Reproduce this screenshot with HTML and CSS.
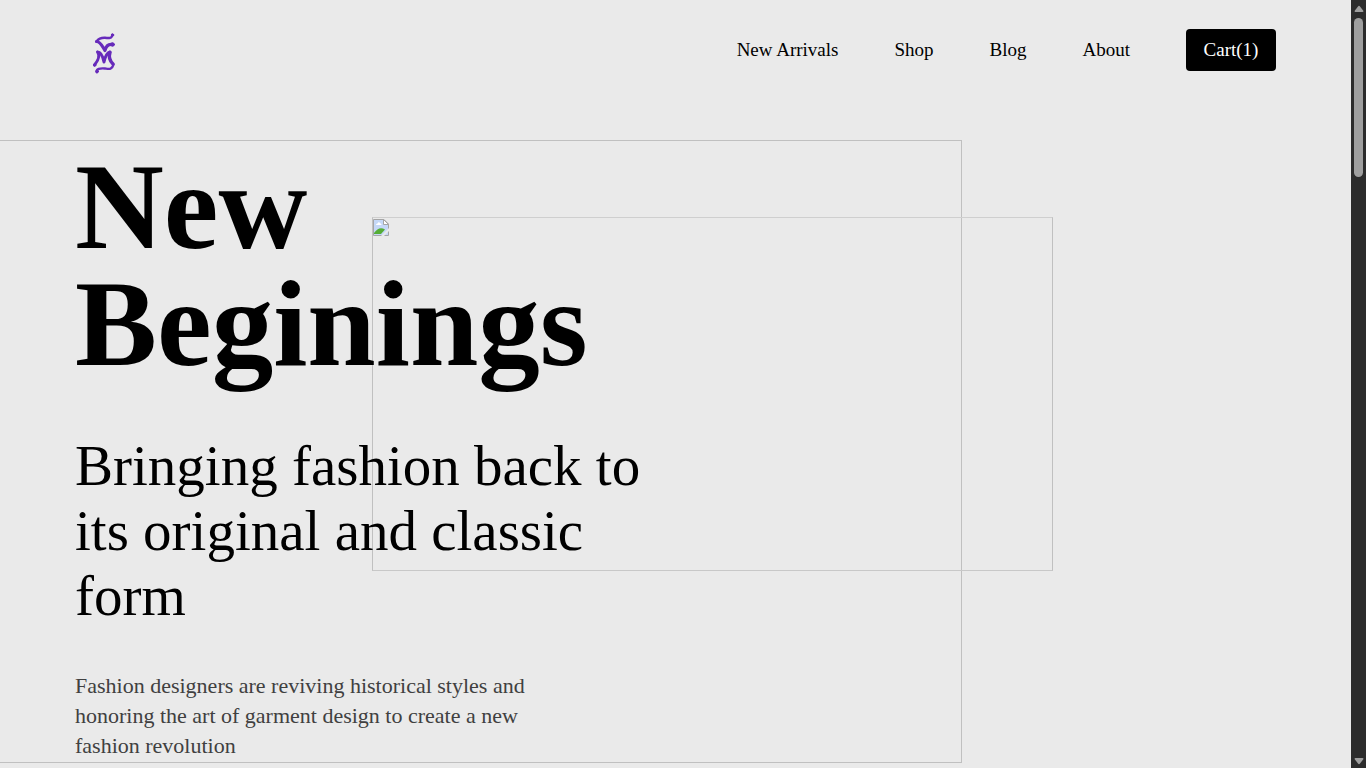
FILE: index.html
```html
<!DOCTYPE html>
<html lang="en">
<head>
<meta charset="utf-8">
<meta name="viewport" content="width=device-width, initial-scale=1">
<title>New Beginings</title>
<link rel="stylesheet" href="styles.css">
</head>
<body>
<div class="shell">
  <div class="page">
    <header class="header">
      <a class="logo" href="#" aria-label="Home">
        <svg width="24" height="42" viewBox="0 0 24 42" fill="none" stroke="#672bbb" stroke-linecap="round" stroke-linejoin="round">
          <path stroke-width="2.400" d="M20.300 3C20 6.500 17 6.200 13 5.800C9 5.600 6 7.500 4.500 9.500"/>
          <path stroke-width="3.200" d="M4.500 9.500C8.500 9.500 10 14 13 18.500C14 14 16 11.500 21 12.500"/>
          <path stroke-width="3" d="M5.500 20C8 23 6.500 28 2.500 33M5.500 20C9 20 11 25 12 30C13 25 15 21 18 20"/>
          <path stroke-width="3.400" d="M18 20.500C16.500 25 18 29 21 32"/>
          <path stroke-width="2.400" d="M21.500 32.500C20 38 17 37 13 36.500C8 36 4 37 5 40"/>
          <circle cx="20.500" cy="3" r="1.200" fill="#672bbb"/><circle cx="20.500" cy="12.500" r="1.800" fill="#672bbb"/>
          <circle cx="2.700" cy="33" r="1.200" fill="#672bbb"/><circle cx="5" cy="39.500" r="1.400" fill="#672bbb"/>
        </svg>
      </a>
      <nav class="nav">
        <a href="#">New Arrivals</a>
        <a href="#">Shop</a>
        <a href="#">Blog</a>
        <a href="#">About</a>
        <button class="cart" type="button">Cart(1)</button>
      </nav>
    </header>
    <main class="hero">
      <div class="frame frame-back"></div>
      <div class="frame frame-front">
        <svg width="16" height="17" viewBox="0 0 16 17">
          <path d="M0.500 0.500H11L15.500 5V16.500H0.500Z" fill="#c5d8f7" stroke="#a5a5a5"/>
          <path d="M3 6Q3 4.500 4.500 4.500Q5.500 2 7.500 4.500Q8.500 4.500 8.500 6Z" fill="#fff"/>
          <path d="M1 15V14Q6 7 12 10.500L8 15Z" fill="#55ad36"/>
          <path d="M10.500 0.500V5.500H15.500Z" fill="#fff" stroke="#a5a5a5"/>
          <path d="M8 17L16 9V12L11 17Z" fill="#eaeaea"/>
        </svg>
      </div>
      <div class="copy">
        <h1>New Beginings</h1>
        <h2>Bringing fashion back to its original and classic form</h2>
        <p>Fashion designers are reviving historical styles and honoring the art of garment design to create a new fashion revolution</p>
      </div>
    </main>
  </div>
  <div class="scrollbar" aria-hidden="true">
    <svg width="10" height="8" viewBox="0 0 10 8"><path d="M4 1.500Q5 0 6 1.500L9.500 6Q9.500 7 8.500 7H1.500Q.5 7 .5 6Z" fill="#9f9f9f"/></svg>
    <div class="thumb"></div>
    <svg class="down" width="10" height="8" viewBox="0 0 10 8"><path d="M4 6.500Q5 8 6 6.500L9.500 2Q9.500 1 8.500 1H1.500Q.5 1 .5 2Z" fill="#9f9f9f"/></svg>
  </div>
</div>
</body>
</html>
```
FILE: styles.css
```css
* {
  box-sizing: border-box;
}

body {
  margin: 0;
  background: #eaeaea;
  color: #000;
  font-family: "Liberation Serif", "Times New Roman", serif;
}

.shell {
  display: flex;
  height: 100vh;
  overflow: hidden;
}

.page {
  flex: 1;
  min-width: 0;
}

.header {
  display: flex;
  justify-content: space-between;
  align-items: flex-start;
  height: 140px;
  padding: 29px 75px 0;
}

.logo {
  display: block;
  padding: 3px 17px 0;
}

.logo svg {
  display: block;
}

.nav {
  display: flex;
  align-items: center;
  gap: 56px;
  font-size: 19px;
}

.nav a {
  color: inherit;
  text-decoration: none;
}

.cart {
  min-width: 90px;
  height: 42px;
  padding: 0 17px;
  border: 0;
  border-radius: 4px;
  background: #000;
  color: #fff;
  font: inherit;
}

.hero {
  position: relative;
  padding: 8px 75px 0;
}

.frame {
  position: absolute;
  border: 1px solid #c0c0c0;
}

.frame-back {
  top: 0;
  left: 0;
  right: 389px;
  height: 623px;
  border-left: 0;
}

.frame-front {
  top: 77px;
  left: 372px;
  right: 298px;
  height: 354px;
  border-top-color: #cfcfcf;
  border-bottom-color: #c8c8c8;
}

.frame-front svg {
  display: block;
  margin-top: 1px;
}

.copy {
  position: relative;
  max-width: 600px;
}

h1 {
  margin: 0 0 51px;
  font-size: 123px;
  line-height: 117px;
}

h2 {
  margin: 0 0 43px;
  font-size: 57px;
  font-weight: 400;
  line-height: 65px;
}

p {
  max-width: 480px;
  margin: 0;
  color: #404040;
  font-size: 22px;
  line-height: 30px;
}

.scrollbar {
  display: flex;
  flex-direction: column;
  align-items: center;
  width: 15px;
  padding: 5px 0 3px;
  background: #2c2c2c;
}

.thumb {
  width: 9px;
  height: 159px;
  margin-top: 5px;
  border-radius: 5px;
  background: #9f9f9f;
}

.down {
  margin-top: auto;
}
```
